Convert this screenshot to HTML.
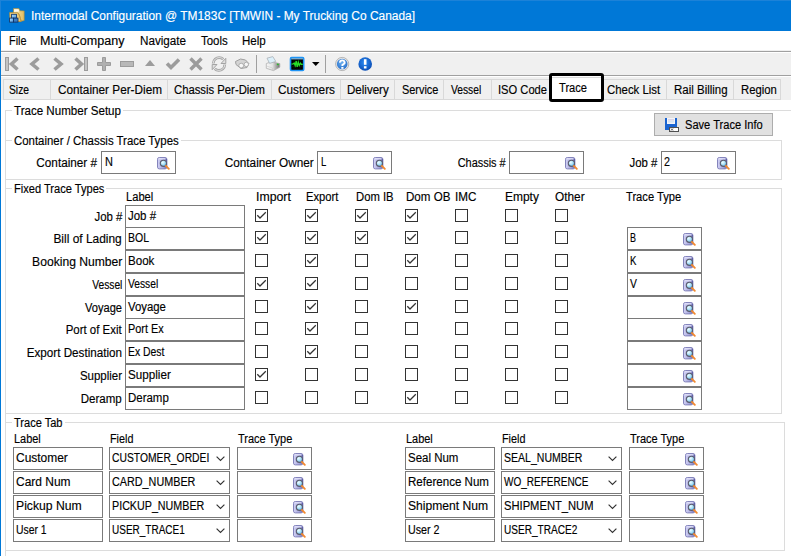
<!DOCTYPE html>
<html><head><meta charset="utf-8"><style>
html,body{margin:0;padding:0}
body{width:791px;height:556px;overflow:hidden;position:relative;background:#fff;font-family:"Liberation Sans",sans-serif;font-size:12px;color:#000}
body>div,body>svg{position:absolute}
.t{line-height:14px;white-space:nowrap;-webkit-text-stroke:0.15px currentColor;}
</style></head><body>
<div style="left:0px;top:0px;width:791px;height:31px;background:#0078d7"></div>
<div style="left:0px;top:0px;width:791px;height:1px;background:#1c82d8"></div>
<div class="t" style="left:31.00px;top:8.84px;transform:scaleX(0.9946);transform-origin:0 50%;color:#fff">Intermodal Configuration @ TM183C [TMWIN - My Trucking Co Canada]</div>
<div class="t" style="left:8.50px;top:33.84px;transform:scaleX(0.9049);transform-origin:0 50%;">File</div>
<div class="t" style="left:40.40px;top:33.84px;transform:scaleX(1.0460);transform-origin:0 50%;">Multi-Company</div>
<div class="t" style="left:139.60px;top:33.84px;transform:scaleX(0.9734);transform-origin:0 50%;">Navigate</div>
<div class="t" style="left:200.90px;top:33.84px;transform:scaleX(0.9532);transform-origin:0 50%;">Tools</div>
<div class="t" style="left:242.40px;top:33.84px;transform:scaleX(0.9643);transform-origin:0 50%;">Help</div>
<div style="left:0px;top:50px;width:791px;height:1px;background:#f0f0f0"></div>
<div style="left:0px;top:51px;width:791px;height:1px;background:#a0a0a0"></div>
<div style="left:0px;top:52px;width:791px;height:1px;background:#fff"></div>
<div style="left:0px;top:53px;width:791px;height:22px;background:#f0f0f0"></div>
<div style="left:0px;top:75px;width:791px;height:1px;background:#a0a0a0"></div>
<div style="left:0px;top:76px;width:791px;height:1px;background:#fff"></div>
<div style="left:0px;top:77px;width:791px;height:23px;background:#f0f0f0"></div>
<svg width="791" height="24" style="position:absolute;left:0;top:52px" viewBox="0 52 791 24"><rect x="5.5" y="57.5" width="3" height="13" fill="#c4c4c4" stroke="#9c9c9c"/><polyline points="17.5,58.5 11.5,64 17.5,69.5" fill="none" stroke="#9c9c9c" stroke-width="3.6"/><polyline points="38.5,58.5 32,64 38.5,69.5" fill="none" stroke="#9c9c9c" stroke-width="3.6"/><polyline points="54.5,58.5 61,64 54.5,69.5" fill="none" stroke="#9c9c9c" stroke-width="3.6"/><polyline points="75.5,58.5 81.5,64 75.5,69.5" fill="none" stroke="#9c9c9c" stroke-width="3.6"/><rect x="84.5" y="57.5" width="3" height="13" fill="#c4c4c4" stroke="#9c9c9c"/><path d="M102.5 57.5h3v5h5v3h-5v5h-3v-5h-5v-3h5z" fill="#b0b0b0" stroke="#9c9c9c"/><rect x="120.5" y="61.5" width="13" height="5" fill="#b8b8b8" stroke="#9c9c9c"/><path d="M145 66 L150 60 L155 66 Z" fill="#9c9c9c"/><polyline points="167,63.5 171,67.5 179,59.5" fill="none" stroke="#9c9c9c" stroke-width="3.6"/><path d="M190.5 58.5 L201.5 69.5 M201.5 58.5 L190.5 69.5" fill="none" stroke="#9c9c9c" stroke-width="3.4"/><path d="M213.2 63.5 C213.5 59.5 216.5 57.6 219.2 57.6 C221 57.6 222.3 58.3 223.2 59.2" fill="none" stroke="#a4a4a4" stroke-width="2.8"/><path d="M213.2 63.5 C213.5 59.5 216.5 57.6 219.2 57.6 C221 57.6 222.3 58.3 223.2 59.2" fill="none" stroke="#e6e6e6" stroke-width="1.0"/><path d="M221 63.5 L225.8 58.3 L225.8 63.5 Z" fill="#e0e0e0" stroke="#a4a4a4" stroke-width="1" stroke-linejoin="round"/><path d="M224.8 64.5 C224.5 68.5 221.5 70.4 218.8 70.4 C217 70.4 215.7 69.7 214.8 68.8" fill="none" stroke="#a4a4a4" stroke-width="2.8"/><path d="M224.8 64.5 C224.5 68.5 221.5 70.4 218.8 70.4 C217 70.4 215.7 69.7 214.8 68.8" fill="none" stroke="#e6e6e6" stroke-width="1.0"/><path d="M217 64.5 L212.2 69.7 L212.2 64.5 Z" fill="#e0e0e0" stroke="#a4a4a4" stroke-width="1" stroke-linejoin="round"/><path d="M235.5 61.5 L240.5 59 L245.5 60 L248.8 63.5 L247 67.5 L241 68.5 L236 64.5 Z" fill="#d4d4d4" stroke="#a0a0a0" stroke-width="1"/><circle cx="241.2" cy="65.6" r="2.4" fill="#f6f6f6" stroke="#a8a8a8" stroke-width="0.9"/><circle cx="246.3" cy="64.4" r="2.2" fill="#f6f6f6" stroke="#a8a8a8" stroke-width="0.9"/><rect x="256" y="55" width="1" height="18" fill="#a0a0a0"/><rect x="325" y="55" width="1" height="18" fill="#a0a0a0"/><defs><linearGradient id="pr" x1="0" x2="1"><stop offset="0" stop-color="#f8f8f8"/><stop offset="0.45" stop-color="#e4e4e4"/><stop offset="1" stop-color="#6e6e6e"/></linearGradient></defs><path d="M266.3 63.5 L271.5 61.8 L279.8 63.6 L279.8 67.2 L273.5 70.6 L266.3 68.3 Z" fill="url(#pr)" stroke="#b0b0b0" stroke-width="0.8"/><path d="M267 58.2 L272.8 56.6 L275.8 61.4 L269.6 63.4 Z" fill="#dcf0fa" stroke="#a8b0b8" stroke-width="0.8"/><path d="M266.5 66 L272.5 68 L272.5 70.2" fill="none" stroke="#c8c8c8" stroke-width="0.6"/><ellipse cx="277.8" cy="64.4" rx="1" ry="0.8" fill="#28c028"/><rect x="290.5" y="57.5" width="13.2" height="13" rx="1.2" fill="#000" stroke="#1e94f6" stroke-width="1.6"/><rect x="291.3" y="58.2" width="11.6" height="1.2" fill="#8ccdfa"/><path d="M291.3 66.5 H303 M294 59.8 V70 M297 59.8 V70 M300 59.8 V70" stroke="#0a2a0a" stroke-width="0.5"/><polyline points="291.5,64.2 293,64 294.2,63 295.2,65.6 296.2,61 297.2,66.8 298.3,62.2 299.3,65.4 300.5,63.2 301.5,64.6 302.8,64.2" fill="none" stroke="#28e028" stroke-width="1.3"/><path d="M312 62 L319.5 62 L315.75 66 Z" fill="#000"/><defs><radialGradient id="hq" cx="0.45" cy="0.4" r="0.6"><stop offset="0" stop-color="#6aaef0"/><stop offset="1" stop-color="#2a72cc"/></radialGradient><radialGradient id="iq" cx="0.45" cy="0.4" r="0.62"><stop offset="0" stop-color="#2c8cf4"/><stop offset="1" stop-color="#0a4cb4"/></radialGradient></defs><circle cx="342.2" cy="64" r="6.6" fill="#e6e6e6" stroke="#a8a8a8" stroke-width="0.8"/><circle cx="342.2" cy="64" r="5.3" fill="url(#hq)"/><path d="M340 62.6 A2.3 2.1 0 1 1 343.2 64.4 L342.4 65 L342.4 66" fill="none" stroke="#fff" stroke-width="1.9"/><rect x="341.3" y="67" width="2.2" height="1.8" fill="#fff"/><circle cx="365.2" cy="64" r="6.8" fill="url(#iq)"/><rect x="363.9" y="59.2" width="2.6" height="5.6" fill="#fff"/><rect x="363.9" y="66.2" width="2.6" height="2.3" fill="#fff"/></svg>
<svg width="18" height="17" style="position:absolute;left:8px;top:7px" viewBox="8 7 18 17"><defs><linearGradient id="fd" x1="0" x2="1"><stop offset="0" stop-color="#f6e6b0"/><stop offset="1" stop-color="#e0bc60"/></linearGradient><linearGradient id="cb" x1="0" y1="0" x2="1" y2="1"><stop offset="0" stop-color="#b4e0ff"/><stop offset="1" stop-color="#4a94d8"/></linearGradient></defs><path d="M13.5 8.6 L19 8.6 L19.9 10.8 L24.2 10.9 L24.2 20.5 L19.6 21.5 L13.5 21 Z" fill="url(#fd)" stroke="#b08a30" stroke-width="0.6"/><path d="M14.2 9.3 L18.5 9.3 L19.2 11.5 L14.2 12 Z" fill="#fffaf0"/><path d="M9.5 12.6 L17 12.4 C18.6 13 19.6 15 20 17 L21.3 21.4 L10 21.8 Z" fill="#ecca74" stroke="#a88430" stroke-width="0.6"/><path d="M18.2 13.2 C19.4 15 20 17.5 21 21" fill="none" stroke="#c09438" stroke-width="0.9"/><rect x="11.6" y="14.3" width="4.9" height="3.9" fill="url(#cb)" stroke="#0a2e66" stroke-width="0.8"/><rect x="9.6" y="18.1" width="4" height="4" fill="url(#cb)" stroke="#0a2e66" stroke-width="0.8"/><rect x="13.6" y="18.1" width="4.4" height="4" fill="#3c7cc0" stroke="#0a2e66" stroke-width="0.8"/></svg>
<div style="left:3px;top:79px;width:48px;height:21px;background:#f0f0f0;border:1px solid #d9d9d9;box-sizing:border-box"></div>
<div class="t" style="left:9.00px;top:82.84px;transform:scaleX(0.8569);transform-origin:0 50%;">Size</div>
<div style="left:50px;top:79px;width:118px;height:21px;background:#f0f0f0;border:1px solid #d9d9d9;box-sizing:border-box"></div>
<div class="t" style="left:57.50px;top:82.84px;transform:scaleX(0.9808);transform-origin:0 50%;">Container Per-Diem</div>
<div style="left:167px;top:79px;width:105px;height:21px;background:#f0f0f0;border:1px solid #d9d9d9;box-sizing:border-box"></div>
<div class="t" style="left:174.30px;top:82.84px;transform:scaleX(0.9412);transform-origin:0 50%;">Chassis Per-Diem</div>
<div style="left:271px;top:79px;width:70px;height:21px;background:#f0f0f0;border:1px solid #d9d9d9;box-sizing:border-box"></div>
<div class="t" style="left:278.00px;top:82.84px;transform:scaleX(0.9826);transform-origin:0 50%;">Customers</div>
<div style="left:340px;top:79px;width:55px;height:21px;background:#f0f0f0;border:1px solid #d9d9d9;box-sizing:border-box"></div>
<div class="t" style="left:346.90px;top:82.84px;transform:scaleX(0.9622);transform-origin:0 50%;">Delivery</div>
<div style="left:394px;top:79px;width:50px;height:21px;background:#f0f0f0;border:1px solid #d9d9d9;box-sizing:border-box"></div>
<div class="t" style="left:401.60px;top:82.84px;transform:scaleX(0.9098);transform-origin:0 50%;">Service</div>
<div style="left:443px;top:79px;width:49px;height:21px;background:#f0f0f0;border:1px solid #d9d9d9;box-sizing:border-box"></div>
<div class="t" style="left:450.50px;top:82.84px;transform:scaleX(0.8541);transform-origin:0 50%;">Vessel</div>
<div style="left:491px;top:79px;width:62px;height:21px;background:#f0f0f0;border:1px solid #d9d9d9;box-sizing:border-box"></div>
<div class="t" style="left:498.20px;top:82.84px;transform:scaleX(0.9300);transform-origin:0 50%;">ISO Code</div>
<div style="left:602px;top:79px;width:65px;height:21px;background:#f0f0f0;border:1px solid #d9d9d9;box-sizing:border-box"></div>
<div class="t" style="left:607.20px;top:82.84px;transform:scaleX(0.9497);transform-origin:0 50%;">Check List</div>
<div style="left:666px;top:79px;width:68px;height:21px;background:#f0f0f0;border:1px solid #d9d9d9;box-sizing:border-box"></div>
<div class="t" style="left:673.70px;top:82.84px;transform:scaleX(0.9568);transform-origin:0 50%;">Rail Billing</div>
<div style="left:733px;top:79px;width:48px;height:21px;background:#f0f0f0;border:1px solid #d9d9d9;box-sizing:border-box"></div>
<div class="t" style="left:740.50px;top:82.84px;transform:scaleX(0.9414);transform-origin:0 50%;">Region</div>
<div style="left:551px;top:77px;width:52px;height:24px;background:#fff;border:1px solid #d9d9d9;border-bottom:none;box-sizing:border-box"></div>
<div class="t" style="left:559.20px;top:81.04px;transform:scaleX(0.9262);transform-origin:0 50%;">Trace</div>
<div style="left:549px;top:73px;width:55px;height:29px;border:3px solid #000;border-radius:3px;box-sizing:border-box"></div>
<div style="left:5px;top:110px;width:800px;height:500px;border:1px solid #dcdcdc;box-sizing:border-box"></div>
<div style="left:12px;top:107px;width:111px;height:7px;background:#fff"></div>
<div class="t" style="left:13.70px;top:103.64px;transform:scaleX(0.9645);transform-origin:0 50%;">Trace Number Setup</div>
<div style="left:654px;top:113px;width:119px;height:23px;background:#e1e1e1;border:1px solid #adadad;box-sizing:border-box"></div>
<div class="t" style="left:684.60px;top:117.54px;transform:scaleX(0.9244);transform-origin:0 50%;">Save Trace Info</div>
<svg width="16" height="16" style="position:absolute;left:664px;top:117px" viewBox="664 117 16 16"><path d="M665 118 L677 118 L677 130 L665 130 Z" fill="#1a64d0"/><rect x="667" y="118" width="8" height="6" fill="#f4f4f8"/><rect x="668" y="119.5" width="6" height="0.8" fill="#c0b8d8"/><rect x="668" y="121.5" width="6" height="0.8" fill="#b8d8f0"/><rect x="669.5" y="127.5" width="9" height="4" fill="#fff" stroke="#505050"/><path d="M671 128.5 L673 130.5 M673 128.5 L671 130.5" stroke="#303030" stroke-width="0.8"/></svg>
<div style="left:5px;top:140px;width:777px;height:40px;border:1px solid #dcdcdc;box-sizing:border-box"></div>
<div style="left:12px;top:137px;width:168.7px;height:7px;background:#fff"></div>
<div class="t" style="left:13.70px;top:133.64px;transform:scaleX(0.9510);transform-origin:0 50%;">Container / Chassis Trace Types</div>
<div style="left:5px;top:188px;width:777px;height:226px;border:1px solid #dcdcdc;box-sizing:border-box"></div>
<div style="left:12px;top:185px;width:94.4px;height:7px;background:#fff"></div>
<div class="t" style="left:13.70px;top:181.64px;transform:scaleX(0.9241);transform-origin:0 50%;">Fixed Trace Types</div>
<div style="left:5px;top:422px;width:780px;height:129px;border:1px solid #dcdcdc;box-sizing:border-box"></div>
<div style="left:12px;top:419px;width:52.5px;height:7px;background:#fff"></div>
<div class="t" style="left:13.70px;top:415.64px;transform:scaleX(0.9205);transform-origin:0 50%;">Trace Tab</div>
<svg width="0" height="0" style="position:absolute"><defs><linearGradient id="cy" x1="0" x2="1" y1="0" y2="0"><stop offset="0" stop-color="#d4d4f6"/><stop offset="0.55" stop-color="#aaaade"/><stop offset="1" stop-color="#6c6cb2"/></linearGradient><radialGradient id="ln" cx="0.38" cy="0.35" r="0.75"><stop offset="0" stop-color="#f0fdff"/><stop offset="0.5" stop-color="#a6e0f8"/><stop offset="1" stop-color="#4ea4dc"/></radialGradient></defs></svg>
<div class="t" style="right:693.70px;top:155.54px;transform:scaleX(0.9784);transform-origin:100% 50%;">Container #</div>
<div style="left:101px;top:151px;width:75px;height:23px;border:1px solid #7a7a7a;box-sizing:border-box;background:#fff"></div>
<div class="t" style="left:104.70px;top:154.84px;transform:scaleX(0.9112);transform-origin:0 50%;">N</div>
<svg width="13" height="13" viewBox="0 0 13 13" style="position:absolute;left:157px;top:157px"><rect x="0.5" y="0.5" width="9.4" height="11.4" rx="1.8" fill="url(#cy)" stroke="#8484bc" stroke-width="1"/><line x1="9.4" y1="2" x2="9.4" y2="10.6" stroke="#5c5ca4" stroke-width="1"/><rect x="1.5" y="1.2" width="7" height="1.2" fill="#e4e4fa"/><circle cx="6.4" cy="6.3" r="3.1" fill="url(#ln)" stroke="#5c5c6c" stroke-width="1.1"/><line x1="8.9" y1="8.9" x2="11.8" y2="11.8" stroke="#f28a30" stroke-width="1.9" stroke-linecap="round"/></svg>
<div class="t" style="right:477.30px;top:155.54px;transform:scaleX(0.9811);transform-origin:100% 50%;">Container Owner</div>
<div style="left:317px;top:151px;width:75px;height:23px;border:1px solid #7a7a7a;box-sizing:border-box;background:#fff"></div>
<div class="t" style="left:320.70px;top:154.84px;transform:scaleX(0.7946);transform-origin:0 50%;">L</div>
<svg width="13" height="13" viewBox="0 0 13 13" style="position:absolute;left:373px;top:157px"><rect x="0.5" y="0.5" width="9.4" height="11.4" rx="1.8" fill="url(#cy)" stroke="#8484bc" stroke-width="1"/><line x1="9.4" y1="2" x2="9.4" y2="10.6" stroke="#5c5ca4" stroke-width="1"/><rect x="1.5" y="1.2" width="7" height="1.2" fill="#e4e4fa"/><circle cx="6.4" cy="6.3" r="3.1" fill="url(#ln)" stroke="#5c5c6c" stroke-width="1.1"/><line x1="8.9" y1="8.9" x2="11.8" y2="11.8" stroke="#f28a30" stroke-width="1.9" stroke-linecap="round"/></svg>
<div class="t" style="right:285.40px;top:155.54px;transform:scaleX(0.9110);transform-origin:100% 50%;">Chassis #</div>
<div style="left:509px;top:151px;width:75px;height:23px;border:1px solid #7a7a7a;box-sizing:border-box;background:#fff"></div>
<svg width="13" height="13" viewBox="0 0 13 13" style="position:absolute;left:565px;top:157px"><rect x="0.5" y="0.5" width="9.4" height="11.4" rx="1.8" fill="url(#cy)" stroke="#8484bc" stroke-width="1"/><line x1="9.4" y1="2" x2="9.4" y2="10.6" stroke="#5c5ca4" stroke-width="1"/><rect x="1.5" y="1.2" width="7" height="1.2" fill="#e4e4fa"/><circle cx="6.4" cy="6.3" r="3.1" fill="url(#ln)" stroke="#5c5c6c" stroke-width="1.1"/><line x1="8.9" y1="8.9" x2="11.8" y2="11.8" stroke="#f28a30" stroke-width="1.9" stroke-linecap="round"/></svg>
<div class="t" style="right:133.40px;top:155.54px;transform:scaleX(0.9469);transform-origin:100% 50%;">Job #</div>
<div style="left:661px;top:151px;width:75px;height:23px;border:1px solid #7a7a7a;box-sizing:border-box;background:#fff"></div>
<div class="t" style="left:663.80px;top:154.84px;transform:scaleX(0.8996);transform-origin:0 50%;">2</div>
<svg width="13" height="13" viewBox="0 0 13 13" style="position:absolute;left:717px;top:157px"><rect x="0.5" y="0.5" width="9.4" height="11.4" rx="1.8" fill="url(#cy)" stroke="#8484bc" stroke-width="1"/><line x1="9.4" y1="2" x2="9.4" y2="10.6" stroke="#5c5ca4" stroke-width="1"/><rect x="1.5" y="1.2" width="7" height="1.2" fill="#e4e4fa"/><circle cx="6.4" cy="6.3" r="3.1" fill="url(#ln)" stroke="#5c5c6c" stroke-width="1.1"/><line x1="8.9" y1="8.9" x2="11.8" y2="11.8" stroke="#f28a30" stroke-width="1.9" stroke-linecap="round"/></svg>
<div class="t" style="left:125.60px;top:189.84px;transform:scaleX(0.9298);transform-origin:0 50%;">Label</div>
<div class="t" style="left:255.50px;top:189.84px;transform:scaleX(1.0232);transform-origin:0 50%;">Import</div>
<div class="t" style="left:305.60px;top:189.84px;transform:scaleX(0.9343);transform-origin:0 50%;">Export</div>
<div class="t" style="left:355.60px;top:189.84px;transform:scaleX(0.9398);transform-origin:0 50%;">Dom IB</div>
<div class="t" style="left:405.70px;top:189.84px;transform:scaleX(0.9650);transform-origin:0 50%;">Dom OB</div>
<div class="t" style="left:455.00px;top:189.84px;transform:scaleX(0.9727);transform-origin:0 50%;">IMC</div>
<div class="t" style="left:505.00px;top:189.84px;transform:scaleX(0.9968);transform-origin:0 50%;">Empty</div>
<div class="t" style="left:555.30px;top:189.84px;transform:scaleX(0.9863);transform-origin:0 50%;">Other</div>
<div class="t" style="left:625.60px;top:189.84px;transform:scaleX(0.9299);transform-origin:0 50%;">Trace Type</div>
<div class="t" style="right:669.00px;top:209.84px;transform:scaleX(0.9503);transform-origin:100% 50%;">Job #</div>
<div style="left:125px;top:205px;width:120px;height:23px;border:1px solid #7a7a7a;box-sizing:border-box;background:#fff"></div>
<div class="t" style="left:128.30px;top:208.84px;transform:scaleX(0.9537);transform-origin:0 50%;">Job #</div>
<svg width="13" height="13" style="position:absolute;left:255px;top:209px"><rect x="0.5" y="0.5" width="12" height="12" fill="#fff" stroke="#333"/><polyline points="2.3,6.2 5,9 10.8,3.2" fill="none" stroke="#333" stroke-width="1.25"/></svg>
<svg width="13" height="13" style="position:absolute;left:305px;top:209px"><rect x="0.5" y="0.5" width="12" height="12" fill="#fff" stroke="#333"/><polyline points="2.3,6.2 5,9 10.8,3.2" fill="none" stroke="#333" stroke-width="1.25"/></svg>
<svg width="13" height="13" style="position:absolute;left:355px;top:209px"><rect x="0.5" y="0.5" width="12" height="12" fill="#fff" stroke="#333"/><polyline points="2.3,6.2 5,9 10.8,3.2" fill="none" stroke="#333" stroke-width="1.25"/></svg>
<svg width="13" height="13" style="position:absolute;left:405px;top:209px"><rect x="0.5" y="0.5" width="12" height="12" fill="#fff" stroke="#333"/><polyline points="2.3,6.2 5,9 10.8,3.2" fill="none" stroke="#333" stroke-width="1.25"/></svg>
<svg width="13" height="13" style="position:absolute;left:455px;top:209px"><rect x="0.5" y="0.5" width="12" height="12" fill="#fff" stroke="#333"/></svg>
<svg width="13" height="13" style="position:absolute;left:505px;top:209px"><rect x="0.5" y="0.5" width="12" height="12" fill="#fff" stroke="#333"/></svg>
<svg width="13" height="13" style="position:absolute;left:555px;top:209px"><rect x="0.5" y="0.5" width="12" height="12" fill="#fff" stroke="#333"/></svg>
<div class="t" style="right:669.00px;top:231.84px;transform:scaleX(0.9940);transform-origin:100% 50%;">Bill of Lading</div>
<div style="left:125px;top:227px;width:120px;height:23px;border:1px solid #7a7a7a;box-sizing:border-box;background:#fff"></div>
<div class="t" style="left:128.30px;top:230.84px;transform:scaleX(0.8746);transform-origin:0 50%;">BOL</div>
<svg width="13" height="13" style="position:absolute;left:255px;top:231px"><rect x="0.5" y="0.5" width="12" height="12" fill="#fff" stroke="#333"/><polyline points="2.3,6.2 5,9 10.8,3.2" fill="none" stroke="#333" stroke-width="1.25"/></svg>
<svg width="13" height="13" style="position:absolute;left:305px;top:231px"><rect x="0.5" y="0.5" width="12" height="12" fill="#fff" stroke="#333"/><polyline points="2.3,6.2 5,9 10.8,3.2" fill="none" stroke="#333" stroke-width="1.25"/></svg>
<svg width="13" height="13" style="position:absolute;left:355px;top:231px"><rect x="0.5" y="0.5" width="12" height="12" fill="#fff" stroke="#333"/><polyline points="2.3,6.2 5,9 10.8,3.2" fill="none" stroke="#333" stroke-width="1.25"/></svg>
<svg width="13" height="13" style="position:absolute;left:405px;top:231px"><rect x="0.5" y="0.5" width="12" height="12" fill="#fff" stroke="#333"/><polyline points="2.3,6.2 5,9 10.8,3.2" fill="none" stroke="#333" stroke-width="1.25"/></svg>
<svg width="13" height="13" style="position:absolute;left:455px;top:231px"><rect x="0.5" y="0.5" width="12" height="12" fill="#fff" stroke="#333"/></svg>
<svg width="13" height="13" style="position:absolute;left:505px;top:231px"><rect x="0.5" y="0.5" width="12" height="12" fill="#fff" stroke="#333"/></svg>
<svg width="13" height="13" style="position:absolute;left:555px;top:231px"><rect x="0.5" y="0.5" width="12" height="12" fill="#fff" stroke="#333"/></svg>
<div style="left:627px;top:227px;width:75px;height:23px;border:1px solid #7a7a7a;box-sizing:border-box;background:#fff"></div>
<div class="t" style="left:630.30px;top:230.84px;transform:scaleX(0.7500);transform-origin:0 50%;">B</div>
<svg width="13" height="13" viewBox="0 0 13 13" style="position:absolute;left:683px;top:233px"><rect x="0.5" y="0.5" width="9.4" height="11.4" rx="1.8" fill="url(#cy)" stroke="#8484bc" stroke-width="1"/><line x1="9.4" y1="2" x2="9.4" y2="10.6" stroke="#5c5ca4" stroke-width="1"/><rect x="1.5" y="1.2" width="7" height="1.2" fill="#e4e4fa"/><circle cx="6.4" cy="6.3" r="3.1" fill="url(#ln)" stroke="#5c5c6c" stroke-width="1.1"/><line x1="8.9" y1="8.9" x2="11.8" y2="11.8" stroke="#f28a30" stroke-width="1.9" stroke-linecap="round"/></svg>
<div class="t" style="right:669.00px;top:254.84px;transform:scaleX(1.0103);transform-origin:100% 50%;">Booking Number</div>
<div style="left:125px;top:250px;width:120px;height:23px;border:1px solid #7a7a7a;box-sizing:border-box;background:#fff"></div>
<div class="t" style="left:128.30px;top:253.84px;transform:scaleX(0.9646);transform-origin:0 50%;">Book</div>
<svg width="13" height="13" style="position:absolute;left:255px;top:254px"><rect x="0.5" y="0.5" width="12" height="12" fill="#fff" stroke="#333"/></svg>
<svg width="13" height="13" style="position:absolute;left:305px;top:254px"><rect x="0.5" y="0.5" width="12" height="12" fill="#fff" stroke="#333"/><polyline points="2.3,6.2 5,9 10.8,3.2" fill="none" stroke="#333" stroke-width="1.25"/></svg>
<svg width="13" height="13" style="position:absolute;left:355px;top:254px"><rect x="0.5" y="0.5" width="12" height="12" fill="#fff" stroke="#333"/></svg>
<svg width="13" height="13" style="position:absolute;left:405px;top:254px"><rect x="0.5" y="0.5" width="12" height="12" fill="#fff" stroke="#333"/><polyline points="2.3,6.2 5,9 10.8,3.2" fill="none" stroke="#333" stroke-width="1.25"/></svg>
<svg width="13" height="13" style="position:absolute;left:455px;top:254px"><rect x="0.5" y="0.5" width="12" height="12" fill="#fff" stroke="#333"/></svg>
<svg width="13" height="13" style="position:absolute;left:505px;top:254px"><rect x="0.5" y="0.5" width="12" height="12" fill="#fff" stroke="#333"/></svg>
<svg width="13" height="13" style="position:absolute;left:555px;top:254px"><rect x="0.5" y="0.5" width="12" height="12" fill="#fff" stroke="#333"/></svg>
<div style="left:627px;top:250px;width:75px;height:23px;border:1px solid #7a7a7a;box-sizing:border-box;background:#fff"></div>
<div class="t" style="left:630.30px;top:253.84px;transform:scaleX(0.8000);transform-origin:0 50%;">K</div>
<svg width="13" height="13" viewBox="0 0 13 13" style="position:absolute;left:683px;top:256px"><rect x="0.5" y="0.5" width="9.4" height="11.4" rx="1.8" fill="url(#cy)" stroke="#8484bc" stroke-width="1"/><line x1="9.4" y1="2" x2="9.4" y2="10.6" stroke="#5c5ca4" stroke-width="1"/><rect x="1.5" y="1.2" width="7" height="1.2" fill="#e4e4fa"/><circle cx="6.4" cy="6.3" r="3.1" fill="url(#ln)" stroke="#5c5c6c" stroke-width="1.1"/><line x1="8.9" y1="8.9" x2="11.8" y2="11.8" stroke="#f28a30" stroke-width="1.9" stroke-linecap="round"/></svg>
<div class="t" style="right:669.00px;top:277.84px;transform:scaleX(0.8541);transform-origin:100% 50%;">Vessel</div>
<div style="left:125px;top:273px;width:120px;height:23px;border:1px solid #7a7a7a;box-sizing:border-box;background:#fff"></div>
<div class="t" style="left:128.30px;top:276.84px;transform:scaleX(0.8541);transform-origin:0 50%;">Vessel</div>
<svg width="13" height="13" style="position:absolute;left:255px;top:277px"><rect x="0.5" y="0.5" width="12" height="12" fill="#fff" stroke="#333"/><polyline points="2.3,6.2 5,9 10.8,3.2" fill="none" stroke="#333" stroke-width="1.25"/></svg>
<svg width="13" height="13" style="position:absolute;left:305px;top:277px"><rect x="0.5" y="0.5" width="12" height="12" fill="#fff" stroke="#333"/><polyline points="2.3,6.2 5,9 10.8,3.2" fill="none" stroke="#333" stroke-width="1.25"/></svg>
<svg width="13" height="13" style="position:absolute;left:355px;top:277px"><rect x="0.5" y="0.5" width="12" height="12" fill="#fff" stroke="#333"/></svg>
<svg width="13" height="13" style="position:absolute;left:405px;top:277px"><rect x="0.5" y="0.5" width="12" height="12" fill="#fff" stroke="#333"/></svg>
<svg width="13" height="13" style="position:absolute;left:455px;top:277px"><rect x="0.5" y="0.5" width="12" height="12" fill="#fff" stroke="#333"/></svg>
<svg width="13" height="13" style="position:absolute;left:505px;top:277px"><rect x="0.5" y="0.5" width="12" height="12" fill="#fff" stroke="#333"/></svg>
<svg width="13" height="13" style="position:absolute;left:555px;top:277px"><rect x="0.5" y="0.5" width="12" height="12" fill="#fff" stroke="#333"/></svg>
<div style="left:627px;top:273px;width:75px;height:23px;border:1px solid #7a7a7a;box-sizing:border-box;background:#fff"></div>
<div class="t" style="left:629.80px;top:276.84px;transform:scaleX(0.8625);transform-origin:0 50%;">V</div>
<svg width="13" height="13" viewBox="0 0 13 13" style="position:absolute;left:683px;top:279px"><rect x="0.5" y="0.5" width="9.4" height="11.4" rx="1.8" fill="url(#cy)" stroke="#8484bc" stroke-width="1"/><line x1="9.4" y1="2" x2="9.4" y2="10.6" stroke="#5c5ca4" stroke-width="1"/><rect x="1.5" y="1.2" width="7" height="1.2" fill="#e4e4fa"/><circle cx="6.4" cy="6.3" r="3.1" fill="url(#ln)" stroke="#5c5c6c" stroke-width="1.1"/><line x1="8.9" y1="8.9" x2="11.8" y2="11.8" stroke="#f28a30" stroke-width="1.9" stroke-linecap="round"/></svg>
<div class="t" style="right:669.00px;top:300.84px;transform:scaleX(0.9241);transform-origin:100% 50%;">Voyage</div>
<div style="left:125px;top:296px;width:120px;height:23px;border:1px solid #7a7a7a;box-sizing:border-box;background:#fff"></div>
<div class="t" style="left:128.30px;top:299.84px;transform:scaleX(0.9466);transform-origin:0 50%;">Voyage</div>
<svg width="13" height="13" style="position:absolute;left:255px;top:300px"><rect x="0.5" y="0.5" width="12" height="12" fill="#fff" stroke="#333"/></svg>
<svg width="13" height="13" style="position:absolute;left:305px;top:300px"><rect x="0.5" y="0.5" width="12" height="12" fill="#fff" stroke="#333"/><polyline points="2.3,6.2 5,9 10.8,3.2" fill="none" stroke="#333" stroke-width="1.25"/></svg>
<svg width="13" height="13" style="position:absolute;left:355px;top:300px"><rect x="0.5" y="0.5" width="12" height="12" fill="#fff" stroke="#333"/></svg>
<svg width="13" height="13" style="position:absolute;left:405px;top:300px"><rect x="0.5" y="0.5" width="12" height="12" fill="#fff" stroke="#333"/><polyline points="2.3,6.2 5,9 10.8,3.2" fill="none" stroke="#333" stroke-width="1.25"/></svg>
<svg width="13" height="13" style="position:absolute;left:455px;top:300px"><rect x="0.5" y="0.5" width="12" height="12" fill="#fff" stroke="#333"/></svg>
<svg width="13" height="13" style="position:absolute;left:505px;top:300px"><rect x="0.5" y="0.5" width="12" height="12" fill="#fff" stroke="#333"/></svg>
<svg width="13" height="13" style="position:absolute;left:555px;top:300px"><rect x="0.5" y="0.5" width="12" height="12" fill="#fff" stroke="#333"/></svg>
<div style="left:627px;top:296px;width:75px;height:23px;border:1px solid #7a7a7a;box-sizing:border-box;background:#fff"></div>
<svg width="13" height="13" viewBox="0 0 13 13" style="position:absolute;left:683px;top:302px"><rect x="0.5" y="0.5" width="9.4" height="11.4" rx="1.8" fill="url(#cy)" stroke="#8484bc" stroke-width="1"/><line x1="9.4" y1="2" x2="9.4" y2="10.6" stroke="#5c5ca4" stroke-width="1"/><rect x="1.5" y="1.2" width="7" height="1.2" fill="#e4e4fa"/><circle cx="6.4" cy="6.3" r="3.1" fill="url(#ln)" stroke="#5c5c6c" stroke-width="1.1"/><line x1="8.9" y1="8.9" x2="11.8" y2="11.8" stroke="#f28a30" stroke-width="1.9" stroke-linecap="round"/></svg>
<div class="t" style="right:669.00px;top:322.84px;transform:scaleX(0.9542);transform-origin:100% 50%;">Port of Exit</div>
<div style="left:125px;top:318px;width:120px;height:23px;border:1px solid #7a7a7a;box-sizing:border-box;background:#fff"></div>
<div class="t" style="left:128.30px;top:321.84px;transform:scaleX(0.9047);transform-origin:0 50%;">Port Ex</div>
<svg width="13" height="13" style="position:absolute;left:255px;top:322px"><rect x="0.5" y="0.5" width="12" height="12" fill="#fff" stroke="#333"/></svg>
<svg width="13" height="13" style="position:absolute;left:305px;top:322px"><rect x="0.5" y="0.5" width="12" height="12" fill="#fff" stroke="#333"/><polyline points="2.3,6.2 5,9 10.8,3.2" fill="none" stroke="#333" stroke-width="1.25"/></svg>
<svg width="13" height="13" style="position:absolute;left:355px;top:322px"><rect x="0.5" y="0.5" width="12" height="12" fill="#fff" stroke="#333"/></svg>
<svg width="13" height="13" style="position:absolute;left:405px;top:322px"><rect x="0.5" y="0.5" width="12" height="12" fill="#fff" stroke="#333"/></svg>
<svg width="13" height="13" style="position:absolute;left:455px;top:322px"><rect x="0.5" y="0.5" width="12" height="12" fill="#fff" stroke="#333"/></svg>
<svg width="13" height="13" style="position:absolute;left:505px;top:322px"><rect x="0.5" y="0.5" width="12" height="12" fill="#fff" stroke="#333"/></svg>
<svg width="13" height="13" style="position:absolute;left:555px;top:322px"><rect x="0.5" y="0.5" width="12" height="12" fill="#fff" stroke="#333"/></svg>
<div style="left:627px;top:318px;width:75px;height:23px;border:1px solid #7a7a7a;box-sizing:border-box;background:#fff"></div>
<svg width="13" height="13" viewBox="0 0 13 13" style="position:absolute;left:683px;top:324px"><rect x="0.5" y="0.5" width="9.4" height="11.4" rx="1.8" fill="url(#cy)" stroke="#8484bc" stroke-width="1"/><line x1="9.4" y1="2" x2="9.4" y2="10.6" stroke="#5c5ca4" stroke-width="1"/><rect x="1.5" y="1.2" width="7" height="1.2" fill="#e4e4fa"/><circle cx="6.4" cy="6.3" r="3.1" fill="url(#ln)" stroke="#5c5c6c" stroke-width="1.1"/><line x1="8.9" y1="8.9" x2="11.8" y2="11.8" stroke="#f28a30" stroke-width="1.9" stroke-linecap="round"/></svg>
<div class="t" style="right:669.00px;top:345.84px;transform:scaleX(0.9730);transform-origin:100% 50%;">Export Destination</div>
<div style="left:125px;top:341px;width:120px;height:23px;border:1px solid #7a7a7a;box-sizing:border-box;background:#fff"></div>
<div class="t" style="left:128.30px;top:344.84px;transform:scaleX(0.8665);transform-origin:0 50%;">Ex Dest</div>
<svg width="13" height="13" style="position:absolute;left:255px;top:345px"><rect x="0.5" y="0.5" width="12" height="12" fill="#fff" stroke="#333"/></svg>
<svg width="13" height="13" style="position:absolute;left:305px;top:345px"><rect x="0.5" y="0.5" width="12" height="12" fill="#fff" stroke="#333"/><polyline points="2.3,6.2 5,9 10.8,3.2" fill="none" stroke="#333" stroke-width="1.25"/></svg>
<svg width="13" height="13" style="position:absolute;left:355px;top:345px"><rect x="0.5" y="0.5" width="12" height="12" fill="#fff" stroke="#333"/></svg>
<svg width="13" height="13" style="position:absolute;left:405px;top:345px"><rect x="0.5" y="0.5" width="12" height="12" fill="#fff" stroke="#333"/></svg>
<svg width="13" height="13" style="position:absolute;left:455px;top:345px"><rect x="0.5" y="0.5" width="12" height="12" fill="#fff" stroke="#333"/></svg>
<svg width="13" height="13" style="position:absolute;left:505px;top:345px"><rect x="0.5" y="0.5" width="12" height="12" fill="#fff" stroke="#333"/></svg>
<svg width="13" height="13" style="position:absolute;left:555px;top:345px"><rect x="0.5" y="0.5" width="12" height="12" fill="#fff" stroke="#333"/></svg>
<div style="left:627px;top:341px;width:75px;height:23px;border:1px solid #7a7a7a;box-sizing:border-box;background:#fff"></div>
<svg width="13" height="13" viewBox="0 0 13 13" style="position:absolute;left:683px;top:347px"><rect x="0.5" y="0.5" width="9.4" height="11.4" rx="1.8" fill="url(#cy)" stroke="#8484bc" stroke-width="1"/><line x1="9.4" y1="2" x2="9.4" y2="10.6" stroke="#5c5ca4" stroke-width="1"/><rect x="1.5" y="1.2" width="7" height="1.2" fill="#e4e4fa"/><circle cx="6.4" cy="6.3" r="3.1" fill="url(#ln)" stroke="#5c5c6c" stroke-width="1.1"/><line x1="8.9" y1="8.9" x2="11.8" y2="11.8" stroke="#f28a30" stroke-width="1.9" stroke-linecap="round"/></svg>
<div class="t" style="right:669.00px;top:368.84px;transform:scaleX(0.9562);transform-origin:100% 50%;">Supplier</div>
<div style="left:125px;top:364px;width:120px;height:23px;border:1px solid #7a7a7a;box-sizing:border-box;background:#fff"></div>
<div class="t" style="left:128.30px;top:367.84px;transform:scaleX(0.9721);transform-origin:0 50%;">Supplier</div>
<svg width="13" height="13" style="position:absolute;left:255px;top:368px"><rect x="0.5" y="0.5" width="12" height="12" fill="#fff" stroke="#333"/><polyline points="2.3,6.2 5,9 10.8,3.2" fill="none" stroke="#333" stroke-width="1.25"/></svg>
<svg width="13" height="13" style="position:absolute;left:305px;top:368px"><rect x="0.5" y="0.5" width="12" height="12" fill="#fff" stroke="#333"/></svg>
<svg width="13" height="13" style="position:absolute;left:355px;top:368px"><rect x="0.5" y="0.5" width="12" height="12" fill="#fff" stroke="#333"/></svg>
<svg width="13" height="13" style="position:absolute;left:405px;top:368px"><rect x="0.5" y="0.5" width="12" height="12" fill="#fff" stroke="#333"/></svg>
<svg width="13" height="13" style="position:absolute;left:455px;top:368px"><rect x="0.5" y="0.5" width="12" height="12" fill="#fff" stroke="#333"/></svg>
<svg width="13" height="13" style="position:absolute;left:505px;top:368px"><rect x="0.5" y="0.5" width="12" height="12" fill="#fff" stroke="#333"/></svg>
<svg width="13" height="13" style="position:absolute;left:555px;top:368px"><rect x="0.5" y="0.5" width="12" height="12" fill="#fff" stroke="#333"/></svg>
<div style="left:627px;top:364px;width:75px;height:23px;border:1px solid #7a7a7a;box-sizing:border-box;background:#fff"></div>
<svg width="13" height="13" viewBox="0 0 13 13" style="position:absolute;left:683px;top:370px"><rect x="0.5" y="0.5" width="9.4" height="11.4" rx="1.8" fill="url(#cy)" stroke="#8484bc" stroke-width="1"/><line x1="9.4" y1="2" x2="9.4" y2="10.6" stroke="#5c5ca4" stroke-width="1"/><rect x="1.5" y="1.2" width="7" height="1.2" fill="#e4e4fa"/><circle cx="6.4" cy="6.3" r="3.1" fill="url(#ln)" stroke="#5c5c6c" stroke-width="1.1"/><line x1="8.9" y1="8.9" x2="11.8" y2="11.8" stroke="#f28a30" stroke-width="1.9" stroke-linecap="round"/></svg>
<div class="t" style="right:669.00px;top:391.84px;transform:scaleX(0.9606);transform-origin:100% 50%;">Deramp</div>
<div style="left:125px;top:387px;width:120px;height:23px;border:1px solid #7a7a7a;box-sizing:border-box;background:#fff"></div>
<div class="t" style="left:128.30px;top:390.84px;transform:scaleX(0.9560);transform-origin:0 50%;">Deramp</div>
<svg width="13" height="13" style="position:absolute;left:255px;top:391px"><rect x="0.5" y="0.5" width="12" height="12" fill="#fff" stroke="#333"/></svg>
<svg width="13" height="13" style="position:absolute;left:305px;top:391px"><rect x="0.5" y="0.5" width="12" height="12" fill="#fff" stroke="#333"/></svg>
<svg width="13" height="13" style="position:absolute;left:355px;top:391px"><rect x="0.5" y="0.5" width="12" height="12" fill="#fff" stroke="#333"/></svg>
<svg width="13" height="13" style="position:absolute;left:405px;top:391px"><rect x="0.5" y="0.5" width="12" height="12" fill="#fff" stroke="#333"/><polyline points="2.3,6.2 5,9 10.8,3.2" fill="none" stroke="#333" stroke-width="1.25"/></svg>
<svg width="13" height="13" style="position:absolute;left:455px;top:391px"><rect x="0.5" y="0.5" width="12" height="12" fill="#fff" stroke="#333"/></svg>
<svg width="13" height="13" style="position:absolute;left:505px;top:391px"><rect x="0.5" y="0.5" width="12" height="12" fill="#fff" stroke="#333"/></svg>
<svg width="13" height="13" style="position:absolute;left:555px;top:391px"><rect x="0.5" y="0.5" width="12" height="12" fill="#fff" stroke="#333"/></svg>
<div style="left:627px;top:387px;width:75px;height:23px;border:1px solid #7a7a7a;box-sizing:border-box;background:#fff"></div>
<svg width="13" height="13" viewBox="0 0 13 13" style="position:absolute;left:683px;top:393px"><rect x="0.5" y="0.5" width="9.4" height="11.4" rx="1.8" fill="url(#cy)" stroke="#8484bc" stroke-width="1"/><line x1="9.4" y1="2" x2="9.4" y2="10.6" stroke="#5c5ca4" stroke-width="1"/><rect x="1.5" y="1.2" width="7" height="1.2" fill="#e4e4fa"/><circle cx="6.4" cy="6.3" r="3.1" fill="url(#ln)" stroke="#5c5c6c" stroke-width="1.1"/><line x1="8.9" y1="8.9" x2="11.8" y2="11.8" stroke="#f28a30" stroke-width="1.9" stroke-linecap="round"/></svg>
<div class="t" style="left:13.80px;top:431.54px;transform:scaleX(0.9128);transform-origin:0 50%;">Label</div>
<div class="t" style="left:109.80px;top:431.54px;transform:scaleX(0.8997);transform-origin:0 50%;">Field</div>
<div class="t" style="left:238.20px;top:431.54px;transform:scaleX(0.9148);transform-origin:0 50%;">Trace Type</div>
<div style="left:13px;top:447px;width:90px;height:23px;border:1px solid #7a7a7a;box-sizing:border-box;background:#fff"></div>
<div class="t" style="left:16.20px;top:450.84px;transform:scaleX(0.9960);transform-origin:0 50%;">Customer</div>
<div style="left:109px;top:447px;width:121px;height:23px;border:1px solid #7a7a7a;box-sizing:border-box;background:#fff"></div>
<div class="t" style="left:112.40px;top:450.84px;transform:scaleX(0.8601);transform-origin:0 50%;">CUSTOMER_ORDEI</div>
<svg width="10" height="6" style="position:absolute;left:216px;top:455.8px"><polyline points="0.6,0.6 4.5,4.5 8.4,0.6" fill="none" stroke="#333" stroke-width="1.15"/></svg>
<div style="left:237px;top:447px;width:75px;height:23px;border:1px solid #7a7a7a;box-sizing:border-box;background:#fff"></div>
<svg width="13" height="13" viewBox="0 0 13 13" style="position:absolute;left:293px;top:453px"><rect x="0.5" y="0.5" width="9.4" height="11.4" rx="1.8" fill="url(#cy)" stroke="#8484bc" stroke-width="1"/><line x1="9.4" y1="2" x2="9.4" y2="10.6" stroke="#5c5ca4" stroke-width="1"/><rect x="1.5" y="1.2" width="7" height="1.2" fill="#e4e4fa"/><circle cx="6.4" cy="6.3" r="3.1" fill="url(#ln)" stroke="#5c5c6c" stroke-width="1.1"/><line x1="8.9" y1="8.9" x2="11.8" y2="11.8" stroke="#f28a30" stroke-width="1.9" stroke-linecap="round"/></svg>
<div style="left:13px;top:471px;width:90px;height:23px;border:1px solid #7a7a7a;box-sizing:border-box;background:#fff"></div>
<div class="t" style="left:16.20px;top:474.84px;transform:scaleX(0.9967);transform-origin:0 50%;">Card Num</div>
<div style="left:109px;top:471px;width:121px;height:23px;border:1px solid #7a7a7a;box-sizing:border-box;background:#fff"></div>
<div class="t" style="left:112.40px;top:474.84px;transform:scaleX(0.8999);transform-origin:0 50%;">CARD_NUMBER</div>
<svg width="10" height="6" style="position:absolute;left:216px;top:479.8px"><polyline points="0.6,0.6 4.5,4.5 8.4,0.6" fill="none" stroke="#333" stroke-width="1.15"/></svg>
<div style="left:237px;top:471px;width:75px;height:23px;border:1px solid #7a7a7a;box-sizing:border-box;background:#fff"></div>
<svg width="13" height="13" viewBox="0 0 13 13" style="position:absolute;left:293px;top:477px"><rect x="0.5" y="0.5" width="9.4" height="11.4" rx="1.8" fill="url(#cy)" stroke="#8484bc" stroke-width="1"/><line x1="9.4" y1="2" x2="9.4" y2="10.6" stroke="#5c5ca4" stroke-width="1"/><rect x="1.5" y="1.2" width="7" height="1.2" fill="#e4e4fa"/><circle cx="6.4" cy="6.3" r="3.1" fill="url(#ln)" stroke="#5c5c6c" stroke-width="1.1"/><line x1="8.9" y1="8.9" x2="11.8" y2="11.8" stroke="#f28a30" stroke-width="1.9" stroke-linecap="round"/></svg>
<div style="left:13px;top:495px;width:90px;height:23px;border:1px solid #7a7a7a;box-sizing:border-box;background:#fff"></div>
<div class="t" style="left:16.20px;top:498.84px;transform:scaleX(1.0156);transform-origin:0 50%;">Pickup Num</div>
<div style="left:109px;top:495px;width:121px;height:23px;border:1px solid #7a7a7a;box-sizing:border-box;background:#fff"></div>
<div class="t" style="left:112.40px;top:498.84px;transform:scaleX(0.8931);transform-origin:0 50%;">PICKUP_NUMBER</div>
<svg width="10" height="6" style="position:absolute;left:216px;top:503.8px"><polyline points="0.6,0.6 4.5,4.5 8.4,0.6" fill="none" stroke="#333" stroke-width="1.15"/></svg>
<div style="left:237px;top:495px;width:75px;height:23px;border:1px solid #7a7a7a;box-sizing:border-box;background:#fff"></div>
<svg width="13" height="13" viewBox="0 0 13 13" style="position:absolute;left:293px;top:501px"><rect x="0.5" y="0.5" width="9.4" height="11.4" rx="1.8" fill="url(#cy)" stroke="#8484bc" stroke-width="1"/><line x1="9.4" y1="2" x2="9.4" y2="10.6" stroke="#5c5ca4" stroke-width="1"/><rect x="1.5" y="1.2" width="7" height="1.2" fill="#e4e4fa"/><circle cx="6.4" cy="6.3" r="3.1" fill="url(#ln)" stroke="#5c5c6c" stroke-width="1.1"/><line x1="8.9" y1="8.9" x2="11.8" y2="11.8" stroke="#f28a30" stroke-width="1.9" stroke-linecap="round"/></svg>
<div style="left:13px;top:519px;width:90px;height:23px;border:1px solid #7a7a7a;box-sizing:border-box;background:#fff"></div>
<div class="t" style="left:16.20px;top:522.84px;transform:scaleX(0.8659);transform-origin:0 50%;">User 1</div>
<div style="left:109px;top:519px;width:121px;height:23px;border:1px solid #7a7a7a;box-sizing:border-box;background:#fff"></div>
<div class="t" style="left:112.40px;top:522.84px;transform:scaleX(0.8333);transform-origin:0 50%;">USER_TRACE1</div>
<svg width="10" height="6" style="position:absolute;left:216px;top:527.8px"><polyline points="0.6,0.6 4.5,4.5 8.4,0.6" fill="none" stroke="#333" stroke-width="1.15"/></svg>
<div style="left:237px;top:519px;width:75px;height:23px;border:1px solid #7a7a7a;box-sizing:border-box;background:#fff"></div>
<svg width="13" height="13" viewBox="0 0 13 13" style="position:absolute;left:293px;top:525px"><rect x="0.5" y="0.5" width="9.4" height="11.4" rx="1.8" fill="url(#cy)" stroke="#8484bc" stroke-width="1"/><line x1="9.4" y1="2" x2="9.4" y2="10.6" stroke="#5c5ca4" stroke-width="1"/><rect x="1.5" y="1.2" width="7" height="1.2" fill="#e4e4fa"/><circle cx="6.4" cy="6.3" r="3.1" fill="url(#ln)" stroke="#5c5c6c" stroke-width="1.1"/><line x1="8.9" y1="8.9" x2="11.8" y2="11.8" stroke="#f28a30" stroke-width="1.9" stroke-linecap="round"/></svg>
<div class="t" style="left:405.80px;top:431.54px;transform:scaleX(0.9128);transform-origin:0 50%;">Label</div>
<div class="t" style="left:501.80px;top:431.54px;transform:scaleX(0.8997);transform-origin:0 50%;">Field</div>
<div class="t" style="left:630.20px;top:431.54px;transform:scaleX(0.9148);transform-origin:0 50%;">Trace Type</div>
<div style="left:405px;top:447px;width:90px;height:23px;border:1px solid #7a7a7a;box-sizing:border-box;background:#fff"></div>
<div class="t" style="left:408.20px;top:450.84px;transform:scaleX(0.9565);transform-origin:0 50%;">Seal Num</div>
<div style="left:501px;top:447px;width:121px;height:23px;border:1px solid #7a7a7a;box-sizing:border-box;background:#fff"></div>
<div class="t" style="left:504.40px;top:450.84px;transform:scaleX(0.8774);transform-origin:0 50%;">SEAL_NUMBER</div>
<svg width="10" height="6" style="position:absolute;left:608px;top:455.8px"><polyline points="0.6,0.6 4.5,4.5 8.4,0.6" fill="none" stroke="#333" stroke-width="1.15"/></svg>
<div style="left:629px;top:447px;width:75px;height:23px;border:1px solid #7a7a7a;box-sizing:border-box;background:#fff"></div>
<svg width="13" height="13" viewBox="0 0 13 13" style="position:absolute;left:685px;top:453px"><rect x="0.5" y="0.5" width="9.4" height="11.4" rx="1.8" fill="url(#cy)" stroke="#8484bc" stroke-width="1"/><line x1="9.4" y1="2" x2="9.4" y2="10.6" stroke="#5c5ca4" stroke-width="1"/><rect x="1.5" y="1.2" width="7" height="1.2" fill="#e4e4fa"/><circle cx="6.4" cy="6.3" r="3.1" fill="url(#ln)" stroke="#5c5c6c" stroke-width="1.1"/><line x1="8.9" y1="8.9" x2="11.8" y2="11.8" stroke="#f28a30" stroke-width="1.9" stroke-linecap="round"/></svg>
<div style="left:405px;top:471px;width:90px;height:23px;border:1px solid #7a7a7a;box-sizing:border-box;background:#fff"></div>
<div class="t" style="left:408.20px;top:474.84px;transform:scaleX(0.9638);transform-origin:0 50%;">Reference Num</div>
<div style="left:501px;top:471px;width:121px;height:23px;border:1px solid #7a7a7a;box-sizing:border-box;background:#fff"></div>
<div class="t" style="left:504.40px;top:474.84px;transform:scaleX(0.8338);transform-origin:0 50%;">WO_REFERENCE</div>
<svg width="10" height="6" style="position:absolute;left:608px;top:479.8px"><polyline points="0.6,0.6 4.5,4.5 8.4,0.6" fill="none" stroke="#333" stroke-width="1.15"/></svg>
<div style="left:629px;top:471px;width:75px;height:23px;border:1px solid #7a7a7a;box-sizing:border-box;background:#fff"></div>
<svg width="13" height="13" viewBox="0 0 13 13" style="position:absolute;left:685px;top:477px"><rect x="0.5" y="0.5" width="9.4" height="11.4" rx="1.8" fill="url(#cy)" stroke="#8484bc" stroke-width="1"/><line x1="9.4" y1="2" x2="9.4" y2="10.6" stroke="#5c5ca4" stroke-width="1"/><rect x="1.5" y="1.2" width="7" height="1.2" fill="#e4e4fa"/><circle cx="6.4" cy="6.3" r="3.1" fill="url(#ln)" stroke="#5c5c6c" stroke-width="1.1"/><line x1="8.9" y1="8.9" x2="11.8" y2="11.8" stroke="#f28a30" stroke-width="1.9" stroke-linecap="round"/></svg>
<div style="left:405px;top:495px;width:90px;height:23px;border:1px solid #7a7a7a;box-sizing:border-box;background:#fff"></div>
<div class="t" style="left:408.20px;top:498.84px;transform:scaleX(1.0092);transform-origin:0 50%;">Shipment Num</div>
<div style="left:501px;top:495px;width:121px;height:23px;border:1px solid #7a7a7a;box-sizing:border-box;background:#fff"></div>
<div class="t" style="left:504.40px;top:498.84px;transform:scaleX(0.9322);transform-origin:0 50%;">SHIPMENT_NUM</div>
<svg width="10" height="6" style="position:absolute;left:608px;top:503.8px"><polyline points="0.6,0.6 4.5,4.5 8.4,0.6" fill="none" stroke="#333" stroke-width="1.15"/></svg>
<div style="left:629px;top:495px;width:75px;height:23px;border:1px solid #7a7a7a;box-sizing:border-box;background:#fff"></div>
<svg width="13" height="13" viewBox="0 0 13 13" style="position:absolute;left:685px;top:501px"><rect x="0.5" y="0.5" width="9.4" height="11.4" rx="1.8" fill="url(#cy)" stroke="#8484bc" stroke-width="1"/><line x1="9.4" y1="2" x2="9.4" y2="10.6" stroke="#5c5ca4" stroke-width="1"/><rect x="1.5" y="1.2" width="7" height="1.2" fill="#e4e4fa"/><circle cx="6.4" cy="6.3" r="3.1" fill="url(#ln)" stroke="#5c5c6c" stroke-width="1.1"/><line x1="8.9" y1="8.9" x2="11.8" y2="11.8" stroke="#f28a30" stroke-width="1.9" stroke-linecap="round"/></svg>
<div style="left:405px;top:519px;width:90px;height:23px;border:1px solid #7a7a7a;box-sizing:border-box;background:#fff"></div>
<div class="t" style="left:408.20px;top:522.84px;transform:scaleX(0.8913);transform-origin:0 50%;">User 2</div>
<div style="left:501px;top:519px;width:121px;height:23px;border:1px solid #7a7a7a;box-sizing:border-box;background:#fff"></div>
<div class="t" style="left:504.40px;top:522.84px;transform:scaleX(0.8402);transform-origin:0 50%;">USER_TRACE2</div>
<svg width="10" height="6" style="position:absolute;left:608px;top:527.8px"><polyline points="0.6,0.6 4.5,4.5 8.4,0.6" fill="none" stroke="#333" stroke-width="1.15"/></svg>
<div style="left:629px;top:519px;width:75px;height:23px;border:1px solid #7a7a7a;box-sizing:border-box;background:#fff"></div>
<svg width="13" height="13" viewBox="0 0 13 13" style="position:absolute;left:685px;top:525px"><rect x="0.5" y="0.5" width="9.4" height="11.4" rx="1.8" fill="url(#cy)" stroke="#8484bc" stroke-width="1"/><line x1="9.4" y1="2" x2="9.4" y2="10.6" stroke="#5c5ca4" stroke-width="1"/><rect x="1.5" y="1.2" width="7" height="1.2" fill="#e4e4fa"/><circle cx="6.4" cy="6.3" r="3.1" fill="url(#ln)" stroke="#5c5c6c" stroke-width="1.1"/><line x1="8.9" y1="8.9" x2="11.8" y2="11.8" stroke="#f28a30" stroke-width="1.9" stroke-linecap="round"/></svg>
<div style="left:0;top:0;width:1px;height:556px;background:#0078d7"></div><div style="left:0;top:0;width:1px;height:31px;background:#1c82d8"></div>
</body></html>
